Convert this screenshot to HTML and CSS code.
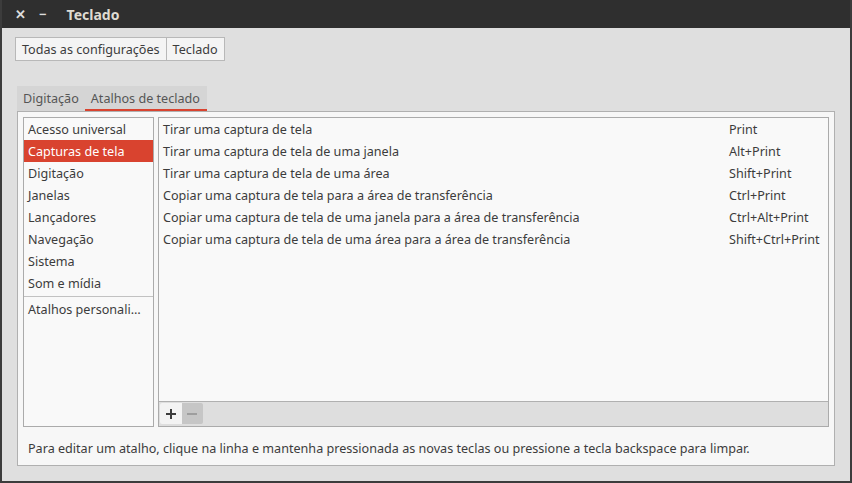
FILE: index.html
```html
<!DOCTYPE html>
<html lang="pt-BR">
<head>
  <meta charset="UTF-8" />
  <title>Teclado</title>
  <link rel="stylesheet" href="styles.css">
</head>
<body>
  <div class="window">
    <div class="titlebar">
      <span class="wbtn close">&#x2715;</span>
      <span class="wbtn min">&#x2212;</span>
      <span class="title">Teclado</span>
    </div>

    <div class="content">
      <div class="breadcrumb">
        <button>Todas as configurações</button>
        <button>Teclado</button>
      </div>

      <div class="tabs">
        <span class="tab">Digitação</span>
        <span class="tab active">Atalhos de teclado</span>
      </div>

      <div class="notebook">
        <div class="panes">
          <ul class="categories">
            <li>Acesso universal</li>
            <li class="selected">Capturas de tela</li>
            <li>Digitação</li>
            <li>Janelas</li>
            <li>Lançadores</li>
            <li>Navegação</li>
            <li>Sistema</li>
            <li>Som e mídia</li>
            <li class="sep">Atalhos personali…</li>
          </ul>

          <div class="shortcuts">
            <div class="rows">
              <div class="row"><span>Tirar uma captura de tela</span><span class="key">Print</span></div>
              <div class="row"><span>Tirar uma captura de tela de uma janela</span><span class="key">Alt+Print</span></div>
              <div class="row"><span>Tirar uma captura de tela de uma área</span><span class="key">Shift+Print</span></div>
              <div class="row"><span>Copiar uma captura de tela para a área de transferência</span><span class="key">Ctrl+Print</span></div>
              <div class="row"><span>Copiar uma captura de tela de uma janela para a área de transferência</span><span class="key">Ctrl+Alt+Print</span></div>
              <div class="row"><span>Copiar uma captura de tela de uma área para a área de transferência</span><span class="key">Shift+Ctrl+Print</span></div>
            </div>
            <div class="toolbar">
              <div class="pm">
                <span class="plus">
                  <svg width="12" height="12" viewBox="0 0 12 12"><path d="M6 1v10M1 6h10" stroke="#3c3c3c" stroke-width="2"/></svg>
                </span>
                <span class="minus">
                  <svg width="12" height="12" viewBox="0 0 12 12"><path d="M1 6h10" stroke="#9e9e9e" stroke-width="2"/></svg>
                </span>
              </div>
            </div>
          </div>
        </div>

        <p class="hint">Para editar um atalho, clique na linha e mantenha pressionada as novas teclas ou pressione a tecla backspace para limpar.</p>
      </div>
    </div>
  </div>
</body>
</html>
```

FILE: styles.css
```css
* {
  box-sizing: border-box;
  margin: 0;
  padding: 0;
}

body {
  width: 852px;
  height: 483px;
  overflow: hidden;
  font-family: "Noto Sans", "Open Sans", sans-serif;
  font-size: 12.6px;
  color: #3c3c3c;
  background: #dfdfdf;
}

.window {
  width: 852px;
  height: 483px;
  display: flex;
  flex-direction: column;
  border-left: 2px solid #3c3c3c;
  border-right: 2px solid #3c3c3c;
  border-bottom: 2px solid #3c3c3c;
}

.titlebar {
  height: 28px;
  flex: none;
  background: #2f2f2f;
  display: flex;
  align-items: center;
  color: #dfdbd2;
}

.wbtn {
  font-size: 13px;
  font-weight: bold;
  color: #dcdcdc;
}

.close {
  margin-left: 13px;
}

.min {
  margin-left: 13px;
}

.title {
  margin-left: 20px;
  font-size: 14px;
  font-weight: bold;
  color: #dfdbd2;
}

.content {
  flex: 1;
  display: flex;
  flex-direction: column;
  padding: 9px 15px 0 13px;
}

.breadcrumb {
  display: flex;
}

.breadcrumb button {
  height: 24px;
  padding: 0 6px;
  font: inherit;
  color: #3c3c3c;
  background: #f4f4f4;
  border: 1px solid #b8b8b8;
}

.breadcrumb button + button {
  border-left: none;
}

.tabs {
  display: flex;
  margin: 25px 0 0 2px;
  align-self: flex-start;
  background: #d5d5d5;
  height: 25px;
}

.tab {
  padding: 4px 6px 0 6px;
  color: #555;
}

.tab.active {
  padding-right: 7px;
  border-bottom: 2px solid #d9432f;
}

.notebook {
  margin-left: 2px;
  height: 355px;
  background: #f7f7f7;
  border: 1px solid #b0b0b0;
  padding: 5px;
  display: flex;
  flex-direction: column;
}

.panes {
  display: flex;
  gap: 4px;
  height: 310px;
}

.categories {
  list-style: none;
  width: 131px;
  background: #f9f9f9;
  border: 1px solid #ababab;
}

.categories li {
  height: 22px;
  line-height: 24px;
  padding-left: 4px;
  white-space: nowrap;
}

.categories li.selected {
  background: #d9432f;
  color: #fff;
}

.categories li.sep {
  border-top: 1px solid #c2c2c2;
  margin-top: 2px;
  height: 25px;
  line-height: 26px;
}

.shortcuts {
  flex: 1;
  display: flex;
  flex-direction: column;
  border: 1px solid #ababab;
  background: #f9f9f9;
}

.rows {
  flex: 1;
}

.row {
  height: 22px;
  line-height: 24px;
  display: flex;
  padding-left: 4px;
}

.row span:first-child {
  width: 566px;
  white-space: nowrap;
}

.toolbar {
  height: 25px;
  background: #dedede;
  border-top: 1px solid #b0b0b0;
  padding: 1px 0 0 1px;
}

.pm {
  display: flex;
  height: 21px;
  width: 43px;
  border-radius: 2px;
  overflow: hidden;
}

.pm span {
  flex: 1;
  display: flex;
  align-items: center;
  justify-content: center;
}

.plus {
  background: #f3f3f3;
}

.minus {
  background: #c6c6c6;
}

.hint {
  margin-top: 13px;
  padding-left: 5px;
  white-space: nowrap;
}
```
